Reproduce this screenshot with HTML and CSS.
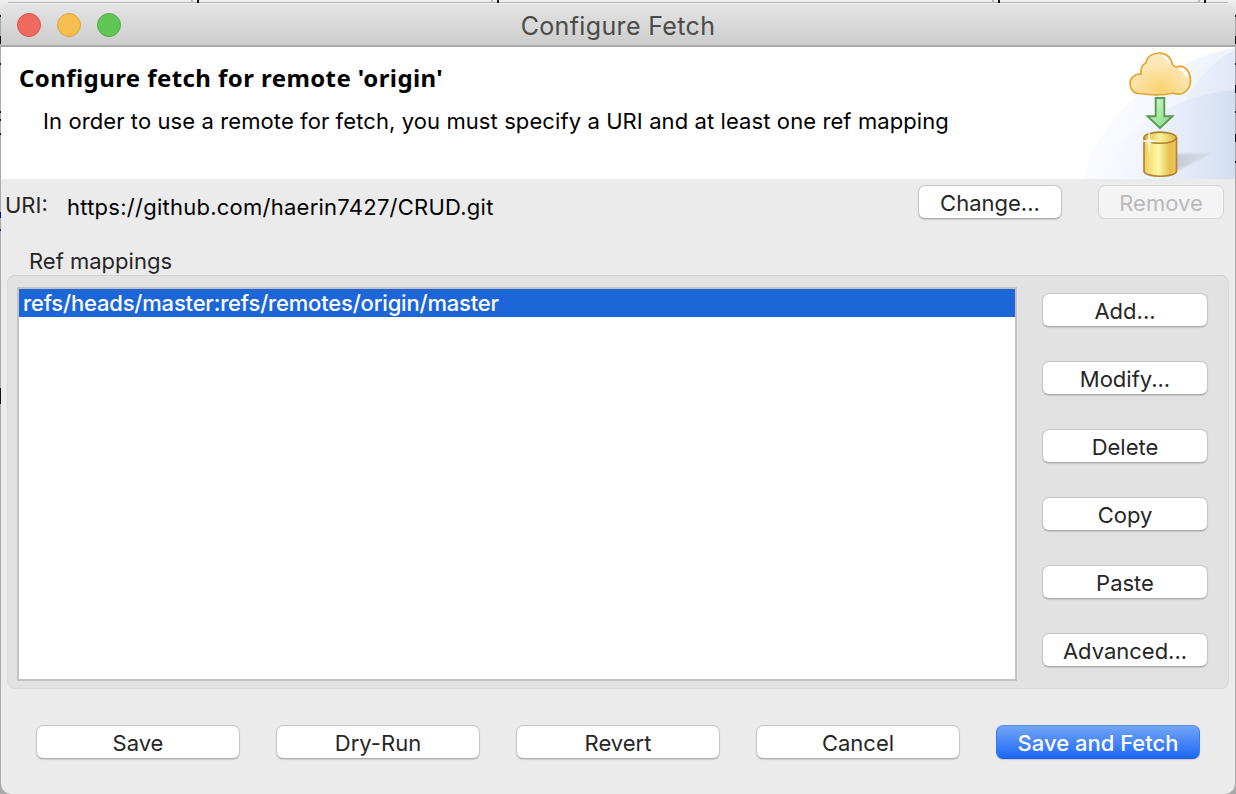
FILE: index.html
```html
<!DOCTYPE html>
<html lang="en">
<head>
<meta charset="utf-8">
<title>Configure Fetch</title>
<link rel="stylesheet" href="styles.css">
</head>
<body>
<div class="desktop">
<main class="window">
  <header class="titlebar">
    <div class="lights"><i class="light close"></i><i class="light minimize"></i><i class="light zoom"></i></div>
    <h1 class="window-title">Configure Fetch</h1>
  </header>
  <section class="banner">
    <div class="banner-text">
      <h2 class="heading">Configure fetch for remote 'origin'</h2>
      <p class="description">In order to use a remote for fetch, you must specify a URI and at least one ref mapping</p>
    </div>
    <svg class="banner-art" width="150" height="132" viewBox="0 0 150 132">
      <defs>
        <linearGradient id="sky" x1="0" x2="1" y1=".3" y2=".6"><stop offset="0" stop-color="#fbfcff"/><stop offset=".4" stop-color="#f6f9fe"/><stop offset="1" stop-color="#e9effa"/></linearGradient>
        <linearGradient id="sky2" x1="0" x2="1"><stop offset="0" stop-color="#f3f6fd" stop-opacity="0"/><stop offset=".4" stop-color="#eaf0fb" stop-opacity=".8"/><stop offset="1" stop-color="#cfdaf1"/></linearGradient>
        <linearGradient id="sky3" x1="0" x2="1"><stop offset="0" stop-color="#e9effb" stop-opacity="0"/><stop offset="1" stop-color="#d9e3f6"/></linearGradient>
        <radialGradient id="cloud" cx=".5" cy=".85" r=".62"><stop offset="0" stop-color="#fbd371"/><stop offset="1" stop-color="#fce8ba"/></radialGradient>
        <linearGradient id="gold" x1="0" x2="1"><stop offset="0" stop-color="#edcb55"/><stop offset=".15" stop-color="#f5df78"/><stop offset=".45" stop-color="#fdf8aa"/><stop offset=".8" stop-color="#e9bd4b"/><stop offset="1" stop-color="#edc95e"/></linearGradient>
        <linearGradient id="lid" x1="0" x2="1"><stop offset="0" stop-color="#d9b540"/><stop offset=".5" stop-color="#f9f09a"/><stop offset="1" stop-color="#dfb53f"/></linearGradient>
        <linearGradient id="green" x1="0" x2="1" y2="1"><stop offset="0" stop-color="#d7f5d4"/><stop offset="1" stop-color="#7ede7b"/></linearGradient>
        <linearGradient id="shade" x1="0" x2="1"><stop offset="0" stop-color="#c6cad3"/><stop offset="1" stop-color="#c9d1e0" stop-opacity=".5"/></linearGradient>
        <filter id="soft"><feGaussianBlur stdDeviation=".8"/></filter>
      </defs>
      <path d="M0 132C4 99 30 62 68 36C94 18 122 5 150 1V132Z" fill="url(#sky)"/>
      <path d="M92 70C105 40 125 15 150 3V132H50Z" fill="url(#sky3)" opacity=".6"/>
      <path d="M18 132C31 92 77 49 150 43V132Z" fill="url(#sky2)" opacity=".75"/>
      <path d="M91 107L127 106Q119 111 91 124Z" fill="url(#shade)" filter="url(#soft)"/>
      <path d="M54 46.500C49 46.500 45 42 45 36.500C45 31 50 26.500 56 27C55 21 58 17 61 16C62 9 68 6 74 6C81 6 86 10 87.500 17.500C90 20 90 20 92 20C98 17 105.500 23 105.500 33.500C105.500 43 97 50 88 46C78 48.500 64 48 54 46.500Z" fill="url(#cloud)" stroke="#e4a534" stroke-width="1.700"/>
      <path d="M77 8.500C84 11 85 14 85 17.500C83 14 82 12 77 8.500M94 21.500C100 21 103 25 102 30C99 29 99 25 94 21.500Z" fill="#fffdf5" stroke="#fffdf5" stroke-width="1"/>
      <path d="M70.700 51H79.300V69.300H87.500L75 81L62.500 69.300H70.700Z" fill="url(#green)" stroke="#5b984f" stroke-width="1.900"/>
      <path d="M59 91V124C59 131 91.500 131 91.500 124V91Z" fill="url(#gold)" stroke="#b68235" stroke-width="1.700"/>
      <ellipse cx="75.200" cy="90.700" rx="16.200" ry="5.600" fill="url(#lid)" stroke="#ad8427" stroke-width="1.600"/>
      <path d="M64 81L65.500 92.500L75 94L65.500 95.500L64.500 108L62.800 95.500L53 94L62.800 92.500Z" fill="#fffde9" opacity=".85"/>
    </svg>
  </section>
  <section class="uri-row">
    <span class="uri-label">URI:</span>
    <span class="uri-value">https://github.com/haerin7427/CRUD.git</span>
    <button class="button change">Change...</button>
    <button class="button remove" disabled>Remove</button>
  </section>
  <h3 class="group-label"><span>Ref mappings</span></h3>
  <section class="group">
    <div class="list"><div class="row"><span class="row-text">refs/heads/master:refs/remotes/origin/master</span></div></div>
    <div class="side">
      <button class="button">Add...</button>
      <button class="button">Modify...</button>
      <button class="button">Delete</button>
      <button class="button">Copy</button>
      <button class="button">Paste</button>
      <button class="button">Advanced...</button>
    </div>
  </section>
  <footer class="actions">
    <button class="button">Save</button>
    <button class="button">Dry-Run</button>
    <button class="button">Revert</button>
    <button class="button">Cancel</button>
    <button class="button primary">Save and Fetch</button>
  </footer>
</main>
</div>
</body>
</html>
```

FILE: styles.css
```css
* { box-sizing: border-box; }
body { margin: 0; font-family: Inter, "Liberation Sans", sans-serif; font-size: 22px; color: #262626; }
h1, h2, h3, p { margin: 0; font-weight: 400; }
.desktop {
  height: 794px; padding: 3px 1px 0; overflow: hidden;
  background:
    linear-gradient(#111, #111) 197px 0 / 2px 3px no-repeat,
    linear-gradient(#111, #111) 497px 0 / 2px 3px no-repeat,
    linear-gradient(#111, #111) 998px 0 / 2px 3px no-repeat,
    linear-gradient(#111, #111) 1204px 0 / 2px 3px no-repeat,
    linear-gradient(#bbb, #bbb) 191px 0 / 2px 3px no-repeat,
    linear-gradient(#bbb, #bbb) 491px 0 / 2px 3px no-repeat,
    linear-gradient(#bbb, #bbb) 992px 0 / 2px 3px no-repeat,
    linear-gradient(#bbb, #bbb) 1198px 0 / 2px 3px no-repeat,
    linear-gradient(#111, #111) 0 15px / 1px 2px no-repeat,
    linear-gradient(#111, #111) 0 36px / 1px 8px no-repeat,
    linear-gradient(#111, #111) 0 63px / 1px 2px no-repeat,
    linear-gradient(#111, #111) 0 111px / 1px 2px no-repeat,
    linear-gradient(#111, #111) 0 119px / 1px 2px no-repeat,
    linear-gradient(#111, #111) 0 133px / 1px 2px no-repeat,
    linear-gradient(#0011a8, #0011a8) 0 212px / 1px 6px no-repeat,
    linear-gradient(#0011a8, #0011a8) 0 229px / 1px 2px no-repeat,
    linear-gradient(#111, #111) 0 388px / 1px 16px no-repeat,
    linear-gradient(#111, #111) 1235px 15px / 1px 2px no-repeat,
    linear-gradient(#111, #111) 1235px 36px / 1px 8px no-repeat,
    linear-gradient(#111, #111) 1235px 63px / 1px 2px no-repeat,
    linear-gradient(#111, #111) 1235px 85px / 1px 8px no-repeat,
    linear-gradient(#111, #111) 1235px 111px / 1px 2px no-repeat,
    linear-gradient(#111, #111) 1235px 134px / 1px 8px no-repeat,
    linear-gradient(#111, #111) 1235px 161px / 1px 2px no-repeat,
    linear-gradient(#b4b4b4, #b4b4b4) 8px 2px / 1220px 1px no-repeat,
    linear-gradient(#efefef, #dcdcdc) 0 0 / 100% 14px no-repeat,
    #a9a9a9;
}
.window { display: flex; flex-direction: column; height: 791px; border-radius: 10px; overflow: hidden; background: #ebebeb; }
.titlebar {
  height: 44px; flex: none; display: grid; grid-template-columns: 200px 1fr 200px; align-items: center;
  background: linear-gradient(#e4e4e4, #cdcdcd); border-top: 1px solid #f4f4f4; border-bottom: 2px solid #aaa;
}
.lights { display: flex; gap: 16px; padding-left: 16px; }
.light { width: 24px; height: 24px; border-radius: 50%; border: 1px solid; }
.close { background: #ee6a5f; border-color: #d6564c; }
.minimize { background: #f6be4f; border-color: #dba33d; }
.zoom { background: #62c655; border-color: #50ab45; }
.window-title { text-align: center; font-size: 25px; line-height: 30px; letter-spacing: .35px; color: #4b4b4b; padding-top: 3px; }
.banner { flex: none; height: 132px; display: flex; justify-content: space-between; background: #fff; color: #000; }
.banner-text { padding: 15px 0 0 18px; white-space: nowrap; }
.heading { font: 700 24px/32px "Noto Sans", "Open Sans", sans-serif; letter-spacing: .42px; }
.description { padding-left: 24px; line-height: 28px; margin-top: 13px; letter-spacing: .095px; }
.banner-art { display: block; flex: none; }
.uri-row { flex: none; height: 66px; display: flex; align-items: flex-start; padding: 6px 11px 0 4px; }
.uri-label { width: 62px; line-height: 28px; padding-top: 6px; }
.uri-value { flex: 1; line-height: 28px; padding-top: 8px; letter-spacing: .25px; color: #000; }
.button {
  height: 34px; padding: 1px 0 0; font: inherit; line-height: 28px; text-align: center; color: #262626; white-space: nowrap;
  border: 1px solid #c6c6c6; border-bottom-color: #afafaf; border-radius: 7px; background: #fff; box-shadow: 0 1px 1px #0002;
}
.change { width: 144px; }
.remove { width: 126px; margin-left: 36px; color: #b9b9b9; background: #f4f4f4; border-color: #d4d4d4; box-shadow: none; }
.group-label { flex: none; height: 30px; font-size: 22px; line-height: 28px; padding: 2px 0 0 28px; }
.group {
  flex: none; height: 414px; margin: 0 6px; padding: 11px 20px 7px 9px; display: flex; justify-content: space-between;
  background: #e2e2e2; border: 1px solid #dadada; border-top-color: #d1d1d1; border-radius: 8px;
}
.list { width: 1000px; height: 394px; border: 2px solid #c3c3c3; background: #fff; }
.row { height: 28px; line-height: 28px; padding-left: 4px; background: #1d66da; color: #fff; white-space: nowrap; font-weight: 500; letter-spacing: -.19px; }
.side { width: 166px; display: flex; flex-direction: column; gap: 34px; padding-top: 6px; }
.actions { display: flex; gap: 36px; padding: 36px 35px 0; }
.actions .button { width: 204px; }
.actions .primary { color: #fff; font-weight: 500; background: linear-gradient(#73a5f7, #1b68f8); border-color: #5b90ef #3b79ef #1b5fe6; }
```
